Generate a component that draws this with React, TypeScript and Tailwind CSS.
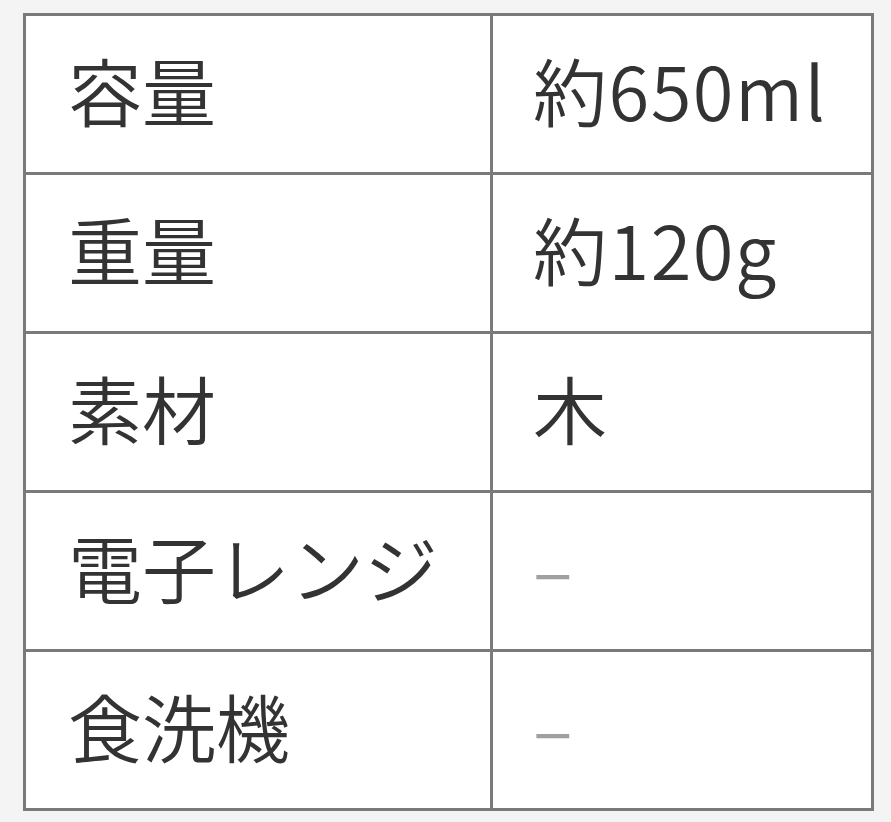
import React from 'react';

const rows: { label: string; value: string; muted?: boolean }[] = [
  { label: '容量', value: '約650ml' },
  { label: '重量', value: '約120g' },
  { label: '素材', value: '木' },
  { label: '電子レンジ', value: '–', muted: true },
  { label: '食洗機', value: '–', muted: true },
];

export default function App() {
  return (
    <div
      className="min-h-[822px] w-full bg-[#f4f4f4] pl-[23px] pt-[13px]"
      style={{ fontFamily: '"Noto Sans CJK JP", "Noto Sans", sans-serif' }}
    >
      <table className="w-[851px] table-fixed border-collapse bg-white text-[74px] font-[350] leading-none text-[#333]">
        <colgroup>
          <col className="w-[467px]" />
          <col />
        </colgroup>
        <tbody>
          {rows.map((r) => (
            <tr key={r.label} className="h-[159px]">
              <td className="border-[3px] border-[#7a7a7a] pb-[10px] pl-[42px] align-middle">{r.label}</td>
              <td
                className={`border-[3px] border-[#7a7a7a] pb-[10px] pl-[40px] align-middle tracking-[1.5px] ${r.muted ? 'text-[#a0a0a0]' : ''}`}
              >
                {r.value}
              </td>
            </tr>
          ))}
        </tbody>
      </table>
    </div>
  );
}
